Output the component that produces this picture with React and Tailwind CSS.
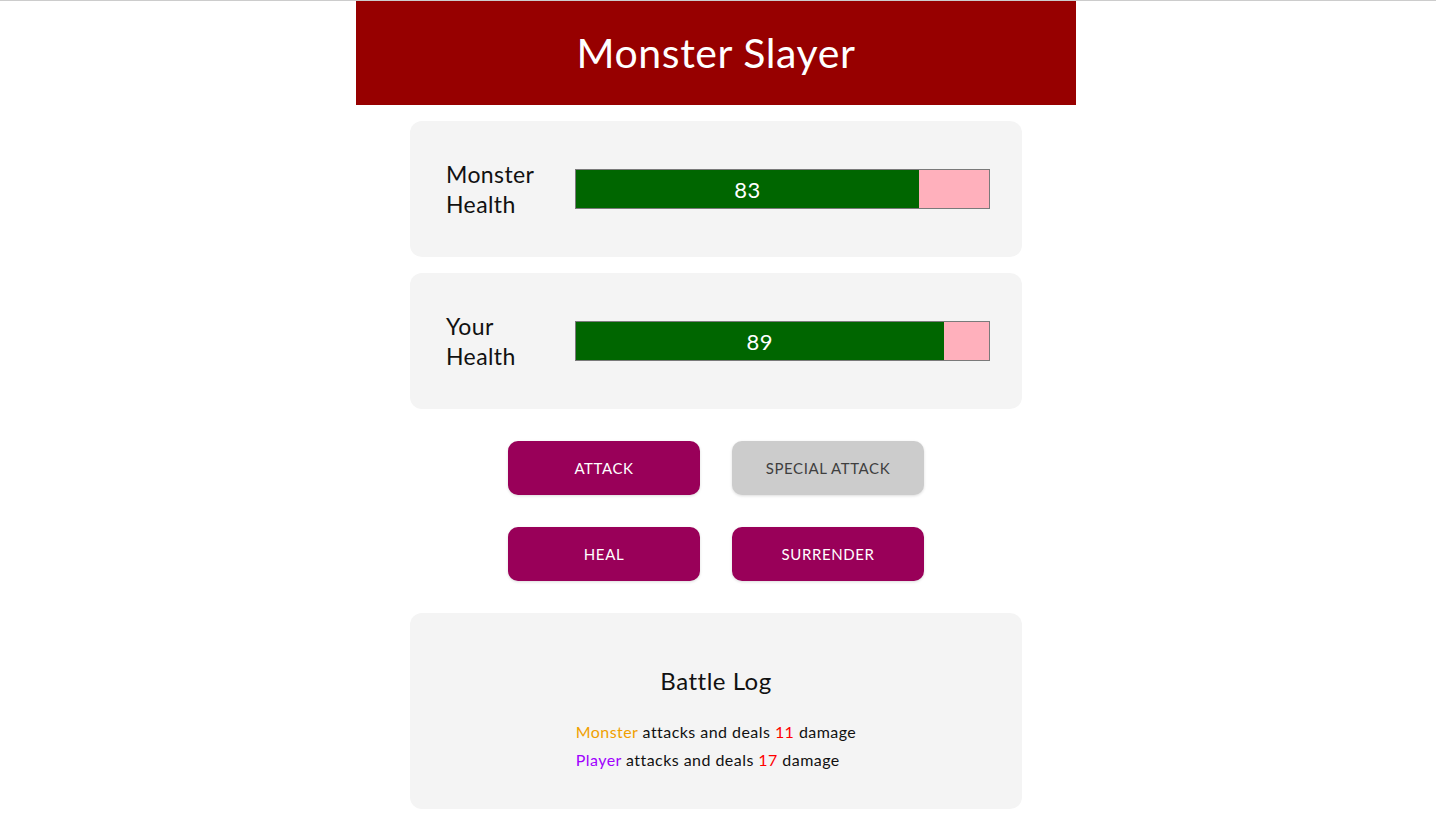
const FONT = { fontFamily: "Lato, 'Open Sans', sans-serif" };

function HealthCard({ label, value }) {
  return (
    <section className="flex h-[136px] w-[612px] items-center rounded-xl bg-[#f4f4f4] pl-9">
      <div className="w-[129px]">
        <h2 className="w-[96px] text-[23px] leading-[30px] tracking-[0.4px] text-[#111]">{label}</h2>
      </div>
      <div className="h-10 w-[415px] border border-[#7a7a7a] bg-[#ffb0bc]">
        <div
          className="flex h-full items-center justify-center bg-[#006600] text-[22px] tracking-[0.5px] text-white"
          style={{ width: `${value}%` }}
        >
          {value}
        </div>
      </div>
    </section>
  );
}

function ActionButton({ children, disabled }) {
  return (
    <button
      className={`h-[54px] w-[192px] rounded-[10px] text-[15px] tracking-[0.6px] shadow-[0_1px_3px_rgba(0,0,0,0.14)] ${
        disabled ? "bg-[#cccccc] text-[#3f3f3f]" : "bg-[#990059] text-white"
      }`}
    >
      {children}
    </button>
  );
}

const LOG = [
  { who: "Monster", color: "text-[#f0a000]", value: 11 },
  { who: "Player", color: "text-[#a000ff]", value: 17 },
];

export default function App() {
  return (
    <div className="min-h-[822px] border-t border-[#cccccc] bg-white pr-1" style={FONT}>
      <header className="mx-auto flex h-[104px] w-[720px] items-center justify-center bg-[#970000]">
        <h1 className="text-[41px] tracking-[0.6px] text-white">Monster Slayer</h1>
      </header>

      <div className="mt-4 flex flex-col items-center gap-4">
        <HealthCard label="Monster Health" value={83} />
        <HealthCard label="Your Health" value={89} />
      </div>

      <div className="mt-8 flex flex-col items-center gap-8">
        <div className="flex gap-8">
          <ActionButton>ATTACK</ActionButton>
          <ActionButton disabled>SPECIAL ATTACK</ActionButton>
        </div>
        <div className="flex gap-8">
          <ActionButton>HEAL</ActionButton>
          <ActionButton>SURRENDER</ActionButton>
        </div>
      </div>

      <section className="mx-auto mt-8 flex h-[196px] w-[612px] flex-col items-center rounded-xl bg-[#f4f4f4] pt-[53px]">
        <h2 className="text-[24px] leading-[30px] tracking-[0.5px] text-[#111]">Battle Log</h2>
        <ul className="mt-[22px] text-left text-[16px] leading-[28px] tracking-[0.45px] text-[#111]">
          {LOG.map((l) => (
            <li key={l.who}>
              <span className={l.color}>{l.who}</span> attacks and deals{" "}
              <span className="text-[#ff0000]">{l.value}</span> damage
            </li>
          ))}
        </ul>
      </section>
    </div>
  );
}
